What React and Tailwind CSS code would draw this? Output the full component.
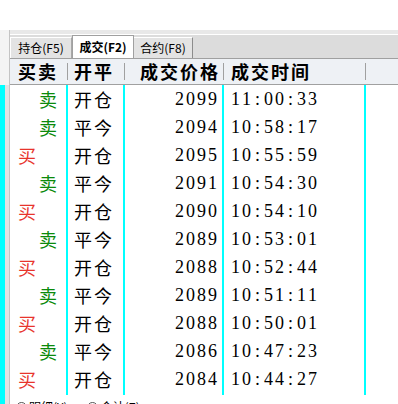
import React from "react";

const rows = [
  ["卖", "开仓", "2099", "11:00:33"],
  ["卖", "平今", "2094", "10:58:17"],
  ["买", "开仓", "2095", "10:55:59"],
  ["卖", "平今", "2091", "10:54:30"],
  ["买", "开仓", "2090", "10:54:10"],
  ["卖", "平今", "2089", "10:53:01"],
  ["买", "开仓", "2088", "10:52:44"],
  ["卖", "平今", "2089", "10:51:11"],
  ["买", "开仓", "2088", "10:50:01"],
  ["卖", "平今", "2086", "10:47:23"],
  ["买", "开仓", "2084", "10:44:27"],
];

const CJK = "font-['Noto_Sans_CJK_SC',sans-serif]";
const NUM = "font-['Liberation_Serif','Noto_Sans_CJK_SC',serif]";

function Mono({ text }) {
  return (
    <span className="flex">
      {text.split("").map((c, i) =>
        c === ":" ? (
          <span key={i} className="inline-block w-[11px] text-center pr-[2px]">:</span>
        ) : (
          <span key={i} className="inline-block w-[11px]">{c}</span>
        )
      )}
    </span>
  );
}

function Sep() {
  return <div className="w-px h-[17px] bg-[#a0a0a0] shrink-0" />;
}

function Radio({ label }) {
  return (
    <div className="flex items-center gap-[2px]">
      <span className="w-[11px] h-[11px] rounded-full border border-[#555] bg-white" />
      <span className={`${CJK} text-[12px] text-black`}>{label}</span>
    </div>
  );
}

export default function App() {
  return (
    <div className="w-[398px] h-[404px] bg-white overflow-hidden flex flex-col">
      <div className="h-[30px] shrink-0 bg-white" />
      <div className="flex flex-1 min-h-0">
        {/* left gutter */}
        <div className="w-[10px] shrink-0 flex flex-col border-r border-[#c4c4c4]">
          <div className="h-[55px] shrink-0 bg-[#f4f4f4]" />
          <div className="flex flex-1">
            <div className="w-[5px] bg-[#00ffff]" />
            <div className="flex-1 bg-[#e2e2e2]" />
          </div>
        </div>

        {/* main */}
        <div className="flex-1 flex flex-col min-w-0">
          {/* tab bar */}
          <div className="h-[28px] shrink-0 flex flex-col">
            <div className="h-[4px] bg-[#e8e8e8]" />
            <div className="h-px bg-white" />
            <div className="flex-1 bg-[#dcdcdc] flex items-end">
              <div className={`${CJK} w-[62px] h-[21px] flex items-center justify-center text-[12px] text-black bg-[#e3e3e3] border-t border-l border-white border-r border-r-[#a8a8a8]`}>
                持仓(F5)
              </div>
              <div className={`${CJK} w-[62px] h-[23px] flex items-center justify-center text-[12px] font-bold text-black bg-white border-t border-l border-r border-[#a0a0a0]`}>
                成交(F2)
              </div>
              <div className={`${CJK} w-[59px] h-[21px] flex items-center justify-center text-[12px] text-black bg-[#e3e3e3] border-t border-white border-r border-r-[#8c8c8c]`}>
                合约(F8)
              </div>
            </div>
          </div>

          {/* header */}
          <div className={`${CJK} h-[27px] shrink-0 flex items-center bg-[#eef1f5] border-t border-b border-[#a0a0a0] text-[18px] font-bold text-black tracking-[2px]`}>
            <div className="w-[57px] flex justify-end pr-[9px]">买卖</div>
            <Sep />
            <div className="w-[56px] pl-[6px]">开平</div>
            <Sep />
            <div className="w-[98px] flex justify-end pr-[3px]">成交价格</div>
            <Sep />
            <div className="w-[141px] pl-[7px]">成交时间</div>
            <Sep />
          </div>

          {/* body */}
          <div className="h-[310px] shrink-0 flex">
            <div className="w-[58px] shrink-0 flex flex-col border-r-2 border-[#00ffff]">
              {rows.map((r, i) => (
                <div
                  key={i}
                  className={`${CJK} h-[28px] flex items-center text-[18px] ${
                    r[0] === "买"
                      ? "justify-start pl-[8px] text-[#e8342c]"
                      : "justify-end pr-[9px] text-[#0b8a0b]"
                  }`}
                >
                  {r[0]}
                </div>
              ))}
            </div>
            <div className="w-[57px] shrink-0 flex flex-col border-r-2 border-[#00ffff]">
              {rows.map((r, i) => (
                <div key={i} className={`${CJK} h-[28px] flex items-center pl-[6px] text-[18px] text-black tracking-[2px]`}>
                  {r[1]}
                </div>
              ))}
            </div>
            <div className="w-[99px] shrink-0 flex flex-col border-r-2 border-[#00ffff]">
              {rows.map((r, i) => (
                <div key={i} className={`${NUM} h-[28px] flex items-center justify-end pr-[3px] text-[18px] text-black`}>
                  <Mono text={r[2]} />
                </div>
              ))}
            </div>
            <div className="w-[142px] shrink-0 flex flex-col border-r-2 border-[#00ffff]">
              {rows.map((r, i) => (
                <div key={i} className={`${NUM} h-[28px] flex items-center pl-[7px] text-[18px] text-black`}>
                  <Mono text={r[3]} />
                </div>
              ))}
            </div>
            <div className="flex-1" />
          </div>

          {/* bottom radio strip */}
          <div className="h-[20px] shrink-0 flex items-start pt-[3px] pl-[6px] gap-[20px] bg-white">
            <Radio label="明细(Y)" />
            <Radio label="合计(Z)" />
          </div>
        </div>
      </div>
    </div>
  );
}
